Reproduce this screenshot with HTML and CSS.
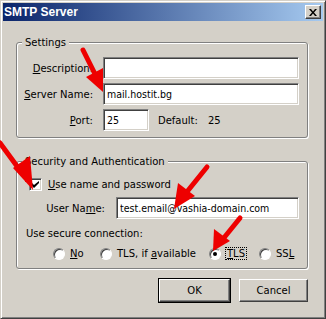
FILE: index.html
```html
<!DOCTYPE html>
<html lang="en">
<head>
  <meta charset="UTF-8" />
  <title>SMTP Server</title>
  <link rel="stylesheet" href="styles.css">
</head>
<body>
  <div class="window">
    <div class="titlebar">
      <span class="title">SMTP Server</span>
      <span class="close-btn">
        <svg width="8" height="7" viewBox="0 0 8 7"><path d="M0 0h2l2 2.5L6 0h2L5 3.5 8 7H6L4 4.5 2 7H0l3-3.5z" fill="#000"/></svg>
      </span>
    </div>

    <div class="content">
      <fieldset class="group settings">
        <legend>Settings</legend>
        <div class="form-grid">
          <label class="lbl"><u>D</u>escription:</label>
          <input class="field" type="text" value="" />

          <label class="lbl"><u>S</u>erver Name:</label>
          <input class="field" type="text" value="mail.hostit.bg" />

          <label class="lbl"><u>P</u>ort:</label>
          <div class="port-row">
            <input class="field port" type="text" value="25" />
            <span class="default-lbl">Default:</span>
            <span class="default-val">25</span>
          </div>
        </div>
      </fieldset>

      <fieldset class="group security">
        <legend>Security and Authentication</legend>
        <div class="check-row">
          <span class="checkbox">
            <svg width="7" height="7" viewBox="0 0 7 7"><path d="M0 2v3l2 2 5-5V-0L2 4z" fill="#000"/></svg>
          </span>
          <span><u>U</u>se name and password</span>
        </div>
        <div class="user-row">
          <label class="lbl">User Na<u>m</u>e:</label>
          <input class="field user" type="text" value="test.email@vashia-domain.com" />
        </div>
        <div class="secure-lbl">Use secure connection:</div>
        <div class="radio-row">
          <span class="radio-item"><span class="radio"></span><span><u>N</u>o</span></span>
          <span class="radio-item"><span class="radio"></span><span>TLS, if <u>a</u>vailable</span></span>
          <span class="radio-item"><span class="radio checked"></span><span class="focus"><u>T</u>LS</span></span>
          <span class="radio-item"><span class="radio"></span><span>SS<u>L</u></span></span>
        </div>
      </fieldset>

      <div class="buttons">
        <button class="btn default">OK</button>
        <button class="btn">Cancel</button>
      </div>
    </div>

    <!-- red annotation arrows -->
    <svg class="arrows" width="326" height="319" viewBox="0 0 326 319">
      <g stroke="#ee0000" stroke-width="5" stroke-linecap="round" fill="#ee0000">
        <line x1="83" y1="50" x2="96" y2="76" />
        <line x1="0" y1="143" x2="22" y2="173" />
        <line x1="207" y1="167" x2="186" y2="193" />
        <line x1="240" y1="218" x2="223" y2="239" />
      </g>
      <g fill="#ee0000">
        <polygon points="103,92 86,77 103,68" />
        <polygon points="33,190 13,168 30,156" />
        <polygon points="174,209 178,183 195,196" />
        <polygon points="213,251 214,229 230,241" />
      </g>
    </svg>
  </div>
</body>
</html>
```

FILE: styles.css
```css
body {
  margin: 0;
  background: #d4d0c8;
}

.window {
  position: relative;
  width: 326px;
  height: 319px;
  box-sizing: border-box;
  background: #d4d0c8;
  border: 1px solid;
  border-color: #d4d0c8 #404040 #404040 #d4d0c8;
  box-shadow: inset 1px 1px 0 #fff, inset -1px -1px 0 #808080;
  padding: 2px;
  font-family: "DejaVu Sans", sans-serif;
  font-size: 10px;
  color: #000;
}

.titlebar {
  display: flex;
  align-items: center;
  justify-content: space-between;
  height: 18px;
  padding: 0 2px 0 1px;
  background: linear-gradient(to right, #0a246a, #a6caf0);
}

.title {
  font-family: "Liberation Sans", Arial, sans-serif;
  font-weight: bold;
  font-size: 12px;
  color: #fff;
}

.close-btn {
  display: flex;
  align-items: center;
  justify-content: center;
  box-sizing: border-box;
  width: 16px;
  height: 14px;
  background: #d4d0c8;
  border: 1px solid;
  border-color: #fff #404040 #404040 #fff;
  box-shadow: inset -1px -1px 0 #808080;
}

.content {
  padding: 15px 15px 0 13px;
}

.group {
  margin: 0;
  padding: 0;
  border: 1px solid #808080;
  border-radius: 3px;
  box-shadow: 1px 1px 0 #fff, inset 1px 1px 0 #fff;
}

.group legend {
  margin-left: 5px;
  padding: 0 3px;
  line-height: 13px;
  background: #d4d0c8;
}

.settings {
  height: 102px;
  box-sizing: border-box;
  padding: 8px 0 5px 0;
}

.form-grid {
  display: grid;
  grid-template-columns: 76px 196px;
  column-gap: 10px;
  row-gap: 4px;
  align-items: center;
}

.lbl {
  text-align: right;
}

.field {
  box-sizing: border-box;
  height: 22px;
  margin: 0;
  padding: 0 3px;
  border: 1px solid;
  border-color: #808080 #fff #fff #808080;
  box-shadow: inset 1px 1px 0 #404040, inset -1px -1px 0 #d4d0c8;
  background: #fff;
  font-family: "DejaVu Sans", sans-serif;
  font-stretch: condensed;
  font-size: 10.5px;
  color: #000;
  outline: none;
}

.port-row {
  display: flex;
  align-items: center;
}

.field.port {
  width: 46px;
}

.default-lbl {
  margin-left: 9px;
  width: 50px;
}

.security {
  margin-top: 17px;
  height: 114px;
  box-sizing: border-box;
  padding: 0;
}

.check-row {
  display: flex;
  align-items: center;
  gap: 6px;
  margin: 10px 0 0 12px;
  height: 13px;
}

.checkbox {
  display: flex;
  align-items: center;
  justify-content: center;
  box-sizing: border-box;
  width: 13px;
  height: 13px;
  background: #fff;
  border: 1px solid;
  border-color: #808080 #fff #fff #808080;
  box-shadow: inset 1px 1px 0 #404040, inset -1px -1px 0 #d4d0c8;
}

.user-row {
  display: grid;
  grid-template-columns: 88px 183px;
  column-gap: 11px;
  align-items: center;
  margin-top: 6px;
}

.secure-lbl {
  margin: 8px 0 0 9px;
  line-height: 13px;
}

.radio-row {
  display: grid;
  grid-template-columns: 47px 109px 50px auto;
  margin: 7px 0 0 36px;
  height: 13px;
}

.radio-item {
  display: flex;
  align-items: center;
  gap: 5px;
}

.radio {
  position: relative;
  box-sizing: border-box;
  width: 12px;
  height: 12px;
  border-radius: 50%;
  background: #fff;
  border: 1px solid;
  border-color: #808080 #fff #fff #808080;
  box-shadow: inset 1px 1px 0 #404040;
}

.radio.checked::after {
  content: "";
  position: absolute;
  left: 3px;
  top: 3px;
  width: 4px;
  height: 4px;
  border-radius: 50%;
  background: #000;
}

.focus {
  padding: 0 1px;
  outline: 1px dotted #000;
}

.buttons {
  display: flex;
  justify-content: flex-end;
  gap: 9px;
  margin-top: 10px;
  padding-right: 0;
}

.btn {
  box-sizing: border-box;
  height: 23px;
  width: 69px;
  margin: 0;
  padding: 0;
  background: #d4d0c8;
  border: 1px solid;
  border-color: #fff #404040 #404040 #fff;
  box-shadow: inset -1px -1px 0 #808080;
  font-family: "DejaVu Sans", sans-serif;
  font-size: 10px;
  color: #000;
}

.btn.default {
  width: 71px;
  outline: 1px solid #000;
  outline-offset: 0;
}

.arrows {
  position: absolute;
  left: -1px;
  top: -1px;
  pointer-events: none;
}
```
